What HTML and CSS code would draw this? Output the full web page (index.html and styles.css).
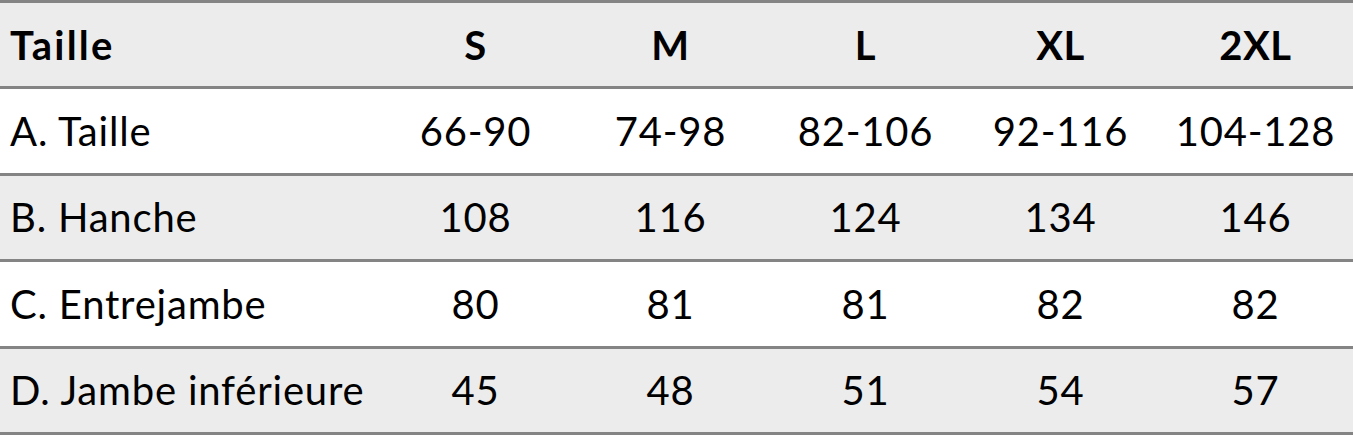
FILE: index.html
```html
<!DOCTYPE html>
<html lang="fr">
<head>
<meta charset="utf-8">
<title>Tableau des tailles</title>
<link rel="stylesheet" href="styles.css">
</head>
<body>
<table class="size-table">
  <thead>
    <tr class="row row-grey">
      <th class="label head-label">Taille</th>
      <th>S</th>
      <th>M</th>
      <th>L</th>
      <th>XL</th>
      <th>2XL</th>
    </tr>
  </thead>
  <tbody>
    <tr class="row row-white">
      <td class="label">A. Taille</td>
      <td>66-90</td>
      <td>74-98</td>
      <td>82-106</td>
      <td>92-116</td>
      <td>104-128</td>
    </tr>
    <tr class="row row-grey">
      <td class="label">B. Hanche</td>
      <td>108</td>
      <td>116</td>
      <td>124</td>
      <td>134</td>
      <td>146</td>
    </tr>
    <tr class="row row-white">
      <td class="label">C. Entrejambe</td>
      <td>80</td>
      <td>81</td>
      <td>81</td>
      <td>82</td>
      <td>82</td>
    </tr>
    <tr class="row row-grey">
      <td class="label">D. Jambe inférieure</td>
      <td>45</td>
      <td>48</td>
      <td>51</td>
      <td>54</td>
      <td>57</td>
    </tr>
  </tbody>
</table>
</body>
</html>
```
FILE: styles.css
```css
html, body {
  margin: 0;
  padding: 0;
  background: #ffffff;
}

.size-table {
  width: 1353px;
  border-collapse: collapse;
  table-layout: fixed;
  font-family: "Lato", "Open Sans", sans-serif;
  font-size: 40px;
  letter-spacing: 0.8px;
  color: #000;
}

.size-table th,
.size-table td {
  height: 83.4px;
  padding: 0;
  text-align: center;
  vertical-align: middle;
  border-top: 3px solid #848484;
  border-bottom: 3px solid #848484;
  width: 195px;
}

.size-table th {
  font-weight: 700;
  letter-spacing: 0.5px;
}

.size-table td {
  font-weight: 400;
}

.size-table .label {
  text-align: left;
  padding-left: 10px;
  width: 368px;
}

.size-table .head-label {
  letter-spacing: 2.2px;
}

.row-grey {
  background: #ececec;
}

.row-white {
  background: #ffffff;
}
```
